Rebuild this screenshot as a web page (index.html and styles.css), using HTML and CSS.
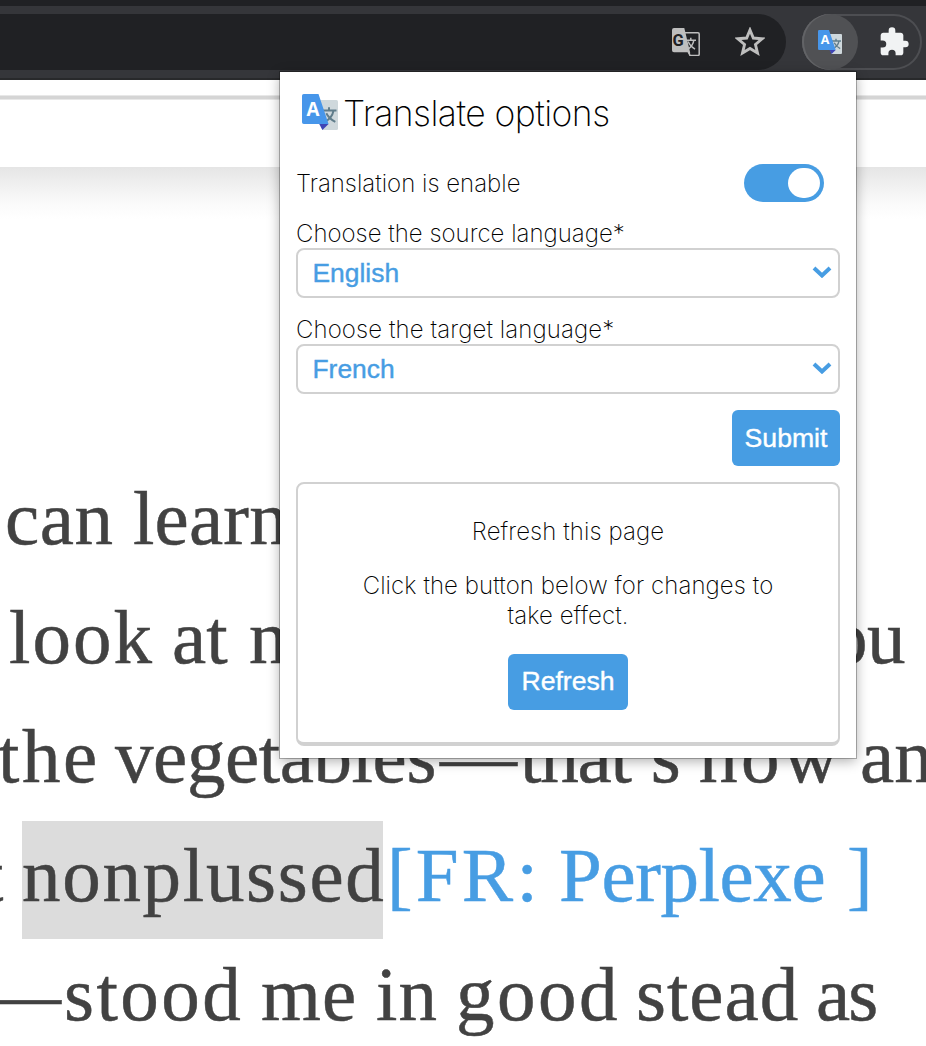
FILE: index.html
```html
<!DOCTYPE html>
<html lang="en">
<head>
<meta charset="utf-8">
<title>Translate options</title>
<link rel="stylesheet" href="styles.css">
</head>
<body>
<header class="toolbar">
  <div class="omnibox">
    <svg class="page-translate" viewBox="0 0 28 28">
      <path d="M12 4.8H26a1.2 1.2 0 0 1 1.2 1.2v20.3a1.2 1.2 0 0 1-1.2 1.2H18L16 23" fill="none" stroke="#bebebe" stroke-width="1.5"/>
      <path d="M14.5 12.200h9.500M18.800 9.800v2.400M21.800 12.400c-.6 4-3 6.800-6 9M16.200 13.600c1.200 3.200 3.600 5.600 6.800 7.600" fill="none" stroke="#bebebe" stroke-width="1.500"/>
      <path fill="#bebebe" d="M2 0h10.3l5.8 24.2V28L15.6 24.2H2a2 2 0 0 1-2-2V2a2 2 0 0 1 2-2z"/>
      <text class="glyph-g" x=".6" y="17.900" font-size="16.500" fill="#202124">G</text>
    </svg>
    <svg class="star" viewBox="0 0 28 28">
      <path d="M14 2.8l3.1 7.500 8.200.7-6.200 5.300 1.900 8L14 20.100l-7 4.200 1.900-8L2.700 11l8.200-.7z" fill="none" stroke="#bebebe" stroke-width="2.700"/>
    </svg>
  </div>
  <div class="extensions">
    <div class="active-ext">
      <svg class="ext-icon" viewBox="0 0 24 24">
        <path fill="#cfd8dc" d="M8 4h15a1 1 0 0 1 1 1v18a1 1 0 0 1-1 1H13.500z"/>
        <path d="M14 11h9M18 8.800V11M21 11.200c-.6 3-2.800 5.800-5.600 7.400M16.200 12.800c1.200 2.400 3 4.200 6 5.800" fill="none" stroke="#607d8b" stroke-width="1.400"/>
        <path fill="#3f45b5" d="M11.500 20h6.200L13.600 24z"/>
        <path fill="#4796ea" d="M1.200 0h9.800l6.700 20H1.200A1.200 1.200 0 0 1 0 18.800V1.200A1.200 1.200 0 0 1 1.200 0z"/>
        <text class="glyph-a" x="2.700" y="14.200" font-size="12.500" fill="#fff">A</text>
      </svg>
    </div>
    <svg class="puzzle" viewBox="0 0 24 24"><path fill="#f1f3f4" d="M20.500 11H19V7c0-1.100-.9-2-2-2h-4V3.500a2.500 2.500 0 0 0-5 0V5H4c-1.100 0-2 .9-2 2v3.800h1.500a2.700 2.700 0 0 1 0 5.400H2V20c0 1.100.9 2 2 2h3.800v-1.500a2.700 2.700 0 0 1 5.400 0V22H17c1.100 0 2-.9 2-2v-4h1.500a2.500 2.500 0 0 0 0-5z"/></svg>
  </div>
</header>

<main class="page">
  <div class="rule"></div>
  <div class="band"></div>
  <article class="text">
    <p class="line l1"><span class="can">can</span><span class="learn">learn</span></p>
    <p class="line l2"><span class="look">look</span><span class="at">at</span><span class="n">n</span><span class="you">you</span></p>
    <p class="line l3"><span class="the">the</span><span class="veg">vegetables</span><span class="dash">—</span><span class="thats">that’s</span><span class="how">how</span><span class="an">an</span></p>
    <p class="line l4"><span class="t">t</span><span class="word">nonplussed</span><span class="fr">[FR:</span><span class="perplexe">Perplexe</span><span class="close">]</span></p>
    <p class="line l5"><span class="dash2">—</span><span class="stood">stood</span><span class="me">me</span><span class="in">in</span><span class="good">good</span><span class="stead">stead</span><span class="as">as</span></p>
  </article>
</main>

<section class="popup">
  <h1 class="title">
    <svg class="logo" viewBox="0 0 24 24">
      <path fill="#cfd8dc" d="M8 4h15a1 1 0 0 1 1 1v18a1 1 0 0 1-1 1H13.500z"/>
      <path d="M14 11h9M18 8.800V11M21 11.200c-.6 3-2.800 5.800-5.600 7.400M16.200 12.800c1.200 2.400 3 4.200 6 5.800" fill="none" stroke="#607d8b" stroke-width="1.300"/>
      <path fill="#3f45b5" d="M11.500 20h6.200L13.600 24z"/>
      <path fill="#4796ea" d="M1.200 0h9.800l6.700 20H1.200A1.200 1.200 0 0 1 0 18.800V1.200A1.200 1.200 0 0 1 1.200 0z"/>
      <text class="glyph-a" x="3" y="14.400" font-size="12.500" fill="#fff">A</text>
    </svg>
    <span class="title-text">Translate options</span>
  </h1>
  <div class="enable"><span class="enable-text">Translation is enable</span><span class="toggle"><i class="knob"></i></span></div>
  <div class="label">Choose the source language*</div>
  <div class="select">English<svg class="chev" viewBox="0 0 20 12"><path d="M2 2l8 7.500L18 2" fill="none" stroke="#479de3" stroke-width="4"/></svg></div>
  <div class="label target">Choose the target language*</div>
  <div class="select">French<svg class="chev" viewBox="0 0 20 12"><path d="M2 2l8 7.500L18 2" fill="none" stroke="#479de3" stroke-width="4"/></svg></div>
  <button class="btn submit">Submit</button>
  <div class="card">
    <p class="card-title">Refresh this page</p>
    <p class="card-text">Click the button below for changes to<br>take effect.</p>
    <button class="btn refresh">Refresh</button>
  </div>
</section>
</body>
</html>
```
FILE: styles.css
```css
* { box-sizing: border-box; }
body { margin: 0; width: 926px; height: 1046px; overflow: hidden; position: relative; background: #fff; }
p, h1 { margin: 0; font-weight: inherit; }
svg { display: block; flex: none; }
.glyph-a { font-family: "Open Sans", sans-serif; font-weight: 700; }
.glyph-g { font-family: Roboto, sans-serif; font-weight: 700; }

/* browser toolbar */
.toolbar { height: 80px; padding-top: 8px; display: flex; align-items: flex-start; gap: 16px; background: #35363a; border-top: 6px solid #202124; border-bottom: 2px solid #28292b; }
.omnibox { width: 786px; height: 56px; border-radius: 0 28px 28px 0; background: #202124; display: flex; align-items: center; padding-left: 672px; gap: 35px; }
.page-translate { width: 28px; height: 28px; }
.star { width: 30px; height: 30px; }
.extensions { width: 120px; height: 56px; border-radius: 28px; box-shadow: inset 0 0 0 2px #4d4e52; display: flex; align-items: center; }
.active-ext { width: 56px; height: 56px; border-radius: 50%; background: #505154; box-shadow: inset 2px 0 0 0 #626366; display: flex; align-items: center; justify-content: center; }
.ext-icon { width: 24px; height: 24px; }
.puzzle { width: 32px; height: 32px; margin-left: 20px; margin-top: -1px; }

/* web page */
.page { height: 966px; overflow: hidden; padding-top: 15px; }
.rule { height: 5px; background: #d5d5d5; border-top: 1px solid #e8e8e8; border-bottom: 1px solid #e8e8e8; }
.band { height: 292px; margin-top: 67px; background: linear-gradient(#e5e5e5, #f0f0f0 18px, #fafafa 36px, #fff 52px); }
.text { color: #424242; font: 77px/119px "Liberation Serif", serif; -webkit-text-stroke: .5px; }
.line { display: flex; height: 119px; white-space: pre; }
.line span { flex: none; }
.l1 { padding-left: 5px; }
.can { width: 128px; letter-spacing: .6px; }
.learn { letter-spacing: .2px; }
.l2 { padding-left: 9px; }
.look { width: 163px; letter-spacing: 2px; }
.at { width: 77px; letter-spacing: 0; }
.n { width: 542px; }
.you { letter-spacing: -.5px; }
.l3 { margin-left: -2px; }
.the { width: 117px; letter-spacing: 2.500px; }
.veg { width: 325px; letter-spacing: -.4px; }
.dash { width: 80px; }
.thats { width: 179px; letter-spacing: -1.200px; }
.how { width: 161px; letter-spacing: 3.500px; }
.l4 { margin-left: -18px; }
.t { width: 40px; }
.word { width: 361px; height: 118px; margin-top: 5px; line-height: 109px; letter-spacing: 1.700px; background: #dcdcdc; }
.fr, .perplexe, .close { color: #479de3; }
.fr { width: 171px; padding-left: 4px; letter-spacing: 3.200px; }
.perplexe { width: 288px; margin-left: 5px; letter-spacing: -.4px; }
.l5 { margin-left: -16px; }
.dash2 { width: 80px; }
.stood { width: 197px; letter-spacing: 2.500px; }
.me { width: 115px; letter-spacing: 1px; }
.in { width: 80px; letter-spacing: 1px; }
.good { width: 180px; letter-spacing: 2.500px; }
.stead { width: 180px; letter-spacing: 1px; }
.as { letter-spacing: -2px; }

/* extension popup */
.popup { position: absolute; left: 280px; top: 72px; width: 576px; height: 686px; padding: 18px 16px 12px; display: flex; flex-direction: column; background: #fff; color: #000; font: 250 24px/30px Inter, sans-serif; letter-spacing: .08px; box-shadow: 0 0 0 1px rgba(0,0,0,.27), 0 3px 12px rgba(0,0,0,.33); }
.title { display: flex; align-items: center; height: 44px; padding-left: 6px; font-size: 35.500px; font-weight: 250; letter-spacing: -.55px; }
.logo { width: 36px; height: 36px; }
.title-text { margin-left: 5px; padding-top: 3px; }
.enable { display: flex; justify-content: space-between; align-items: center; height: 38px; margin-top: 30px; padding-right: 16px; letter-spacing: 0; }
.enable-text { padding-top: 2px; }
.toggle { width: 80px; height: 38px; border-radius: 19px; padding: 4px; background: #479de3; display: flex; justify-content: flex-end; }
.knob { width: 32px; height: 30px; border-radius: 15px; background: #fff; }
.label { margin-top: 16px; height: 30px; line-height: 32px; letter-spacing: 0; }
.target { letter-spacing: .1px; }
.select { height: 50px; padding: 0 6px 0 14.500px; display: flex; align-items: center; justify-content: space-between; border: 2px solid #d1d1d1; border-radius: 8px; color: #479de3; font: 400 26.400px "Liberation Sans", sans-serif; letter-spacing: 0; -webkit-text-stroke: .4px #479de3; }
.chev { width: 20px; height: 12px; margin-top: -2px; }
.btn { border: 0; padding: 1px 0 0; height: 56px; border-radius: 6px; background: #479de3; color: #fff; font: 400 26.600px "Liberation Sans", sans-serif; -webkit-text-stroke: .4px #fff; }
.submit { width: 108px; align-self: flex-end; margin-top: 16px; flex: none; }
.card { height: 264px; margin-top: 16px; border: 2px solid #d1d1d1; border-bottom-width: 4px; border-radius: 8px; padding-top: 33px; text-align: center; }
.card-text { margin-top: 24px; }
.refresh { width: 120px; margin-top: 23px; padding: 0 0 1px; }
```
